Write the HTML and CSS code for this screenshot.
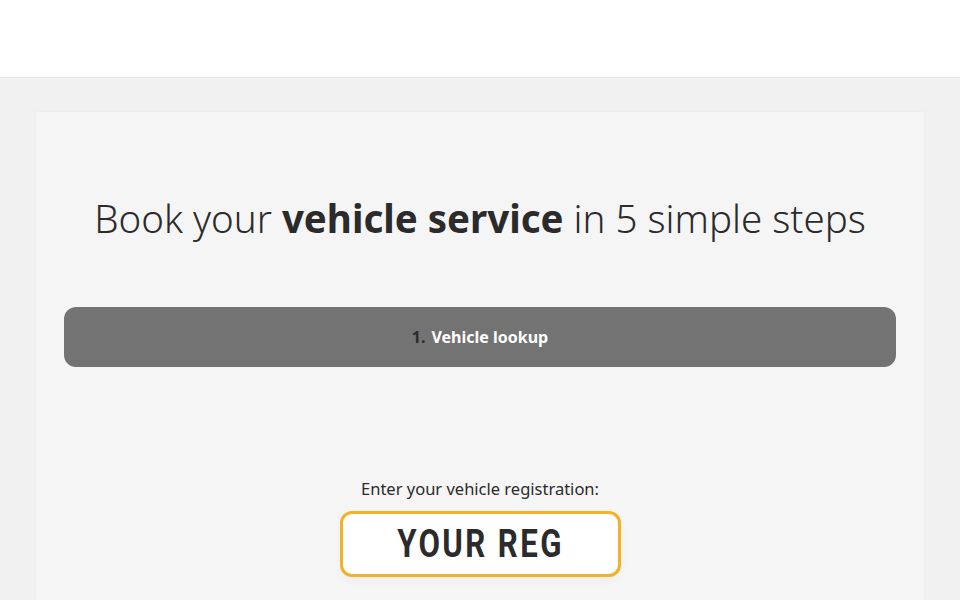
FILE: index.html
```html
<!DOCTYPE html>
<html lang="en">
<head>
    <meta charset="UTF-8">
    <meta name="viewport" content="width=device-width, initial-scale=1.0">
    <title>Book your vehicle service</title>
    <link rel="stylesheet" href="styles.css">
</head>
<body>
    <header class="site-header"></header>

    <main class="page">
        <section class="booking-card">
            <h1 class="booking-title">Book your <strong>vehicle service</strong> in 5 simple steps</h1>

            <div class="step-bar">
                <span class="step-num">1.</span>
                <span class="step-name">Vehicle lookup</span>
            </div>

            <div class="lookup">
                <label class="lookup-label" for="reg">Enter your vehicle registration:</label>
                <div class="reg-plate">
                    <input class="reg-input" id="reg" type="text" placeholder="YOUR REG">
                </div>
            </div>
        </section>
    </main>
</body>
</html>
```

FILE: styles.css
```css
* {
    margin: 0;
    padding: 0;
    box-sizing: border-box;
}

body {
    font-family: 'Noto Sans', 'DejaVu Sans', sans-serif;
    background: #f1f1f1;
    color: #2b2b2b;
    height: 100vh;
    overflow: hidden;
}

.site-header {
    height: 78px;
    background: #fff;
    border-bottom: 1px solid #e6e6e6;
}

.page {
    padding: 34px 36px 0 36px;
}

.booking-card {
    background: #f5f5f5;
    box-shadow: 0 0 3px rgba(0, 0, 0, 0.04);
    padding: 80px 28px 0;
    height: 500px;
}

.booking-title {
    text-align: center;
    font-size: 38.5px;
    font-weight: 300;
    line-height: 52px;
    color: #2b2b2b;
}

.booking-title strong {
    font-weight: 700;
}

.step-bar {
    margin-top: 63px;
    height: 60px;
    background: #737373;
    border-radius: 12px;
    display: flex;
    justify-content: center;
    align-items: center;
    gap: 6px;
    font-size: 16px;
    font-weight: 700;
}

.step-num {
    color: #2b2b2b;
}

.step-name {
    color: #fff;
}

.lookup {
    margin-top: 111px;
    display: flex;
    flex-direction: column;
    align-items: center;
}

.lookup-label {
    font-size: 16.5px;
    color: #2b2b2b;
    line-height: 22px;
    margin-bottom: 11px;
}

/* plate frame; the input inside is squeezed to look like a number-plate font */
.reg-plate {
    width: 281px;
    height: 66px;
    border: 3px solid #f2b227;
    border-radius: 12px;
    background: #fff;
    overflow: hidden;
    box-shadow: 0 4px 10px rgba(0, 0, 0, 0.03);
}

.reg-input {
    width: 343.75px;
    height: 100%;
    border: none;
    background: transparent;
    text-align: center;
    font-family: 'Roboto', sans-serif;
    font-weight: 700;
    font-size: 39px;
    letter-spacing: 3px;
    color: #2b2b2b;
    outline: none;
    transform: scaleX(0.8);
    transform-origin: left center;
}

.reg-input::placeholder {
    color: #2b2b2b;
    opacity: 1;
}
```
